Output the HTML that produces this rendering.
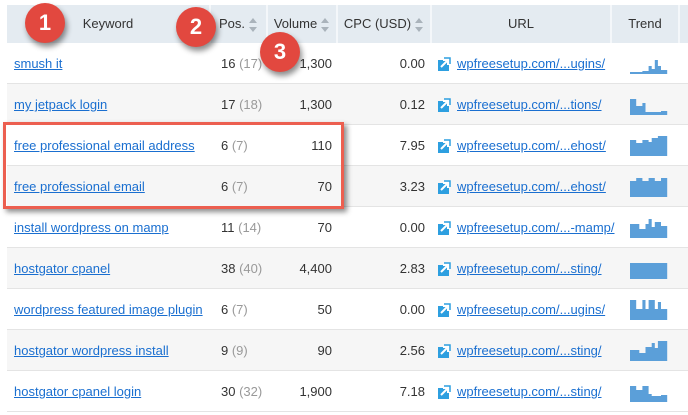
<!DOCTYPE html><html><head><style>
body{margin:0;width:688px;height:415px;background:#fff;font-family:"Liberation Sans",Arial,sans-serif;position:relative;overflow:hidden}
.hdr{position:absolute;left:7px;top:5px;width:681px;height:38px;background:#e4ebf1}
.hc{position:absolute;top:5px;height:38px;line-height:38px;font-size:13px;color:#333;border-right:2px solid #f4f7fa;box-sizing:border-box}
.row{position:absolute;left:7px;width:681px;height:41px;border-bottom:1px solid #e4e4e4;box-sizing:border-box}
.g{background:#f6f6f6}
.t{position:absolute;font-size:13px;line-height:16px;color:#333}
a{color:#1a6fd0;text-decoration:underline}
.mu{color:#999}
.sort{display:inline-block;vertical-align:middle;margin-left:4px;width:9px;height:14px;position:relative}
.sort:before{content:"";position:absolute;top:0;left:0;border:4.5px solid transparent;border-bottom:5px solid #aab3bb;border-top:0}
.sort:after{content:"";position:absolute;bottom:0;left:0;border:4.5px solid transparent;border-top:5px solid #aab3bb;border-bottom:0}
.badge{position:absolute;width:40px;height:40px;border-radius:50%;background:#e2483f;color:#fff;font-weight:bold;font-size:22px;text-align:center;line-height:40px;box-shadow:2px 4px 6px rgba(0,0,0,.45)}
.box{position:absolute;left:3px;top:122px;width:341px;height:87px;border:3px solid #ec5f50;box-sizing:border-box;box-shadow:3px 3px 5px rgba(0,0,0,.45)}
</style></head><body>
<div class="hdr"></div>
<div class="hc" style="left:7px;width:204px;text-align:center">Keyword</div>
<div class="hc" style="left:211px;width:57px;text-align:center">Pos.<span class="sort"></span></div>
<div class="hc" style="left:268px;width:70px;text-align:center">Volume<span class="sort"></span></div>
<div class="hc" style="left:338px;width:94px;text-align:center">CPC (USD)<span class="sort"></span></div>
<div class="hc" style="left:432px;width:180px;text-align:center">URL</div>
<div class="hc" style="left:612px;width:68px;text-align:center">Trend</div>

<div id="rows"></div>
<script>
var d=[["smush it","16","17","1,300","0.00","ugins/",[2,2,2,2,3,3,8,5,14,8,4,4]],
["my jetpack login","17","18","1,300","0.12","tions/",[16,16,9,9,12,3,3,3,3,3,4,4]],
["free professional email address","6","7","110","7.95","ehost/",[16,16,13,13,16,16,14,18,18,20,20,20]],
["free professional email","6","7","70","3.23","ehost/",[16,16,19,19,16,16,19,19,16,16,19,19]],
["install wordpress on mamp","11","14","70","0.00","-mamp/",[14,14,14,9,9,14,19,11,16,16,12,12]],
["hostgator cpanel","38","40","4,400","2.83","sting/",[16,16,16,16,16,16,16,16,16,16,16,16]],
["wordpress featured image plugin","6","7","50","0.00","ugins/",[20,20,11,11,20,11,20,20,11,18,11,11]],
["hostgator wordpress install","9","9","90","2.56","sting/",[11,11,11,8,8,14,14,18,13,20,20,20]],
["hostgator cpanel login","30","32","1,900","7.18","sting/",[16,16,12,12,16,16,8,6,6,6,7,7]]];
var h="";
d.forEach(function(r,i){var y=43+41*i,c=y+13;
h+='<div class="row'+(i%2?' g':'')+'" style="top:'+y+'px"></div>';
h+='<div class="t" style="left:14px;top:'+c+'px"><a>'+r[0]+'</a></div>';
h+='<div class="t" style="left:221px;top:'+c+'px">'+r[1]+' <span class="mu">('+r[2]+')</span></div>';
h+='<div class="t" style="right:356px;top:'+c+'px">'+r[3]+'</div>';
h+='<div class="t" style="right:263px;top:'+c+'px">'+r[4]+'</div>';
h+='<svg style="position:absolute;left:437px;top:'+(c+1)+'px" width="14" height="14"><rect x="1" y="3" width="11" height="11" fill="#2d9fe0"/><path d="M4 10 L10 4 M6 3 H11 V8" stroke="#fff" stroke-width="2" fill="none"/><path d="M7 1 H13 V7" stroke="#2d9fe0" stroke-width="1.5" fill="none"/></svg>';
h+='<div class="t" style="left:457px;top:'+c+'px"><a>wpfreesetup.com/...'+r[5]+'</a></div>';
var p='M0 21';
r[6].forEach(function(v,j){var x=(j*3.1).toFixed(1),x2=((j+1)*3.1).toFixed(1);p+=' L'+x+' '+(21-v)+' L'+x2+' '+(21-v);});
p+=' L37.2 21 Z';
h+='<svg style="position:absolute;left:630px;top:'+(y+10)+'px" width="38" height="22"><path d="'+p+'" fill="#5b9fd9"/></svg>';});
document.getElementById("rows").innerHTML=h;
</script>
<div class="box"></div>
<div class="badge" style="left:25px;top:3px">1</div>
<div class="badge" style="left:176px;top:7px">2</div>
<div class="badge" style="left:260px;top:32px">3</div>
</body></html>
